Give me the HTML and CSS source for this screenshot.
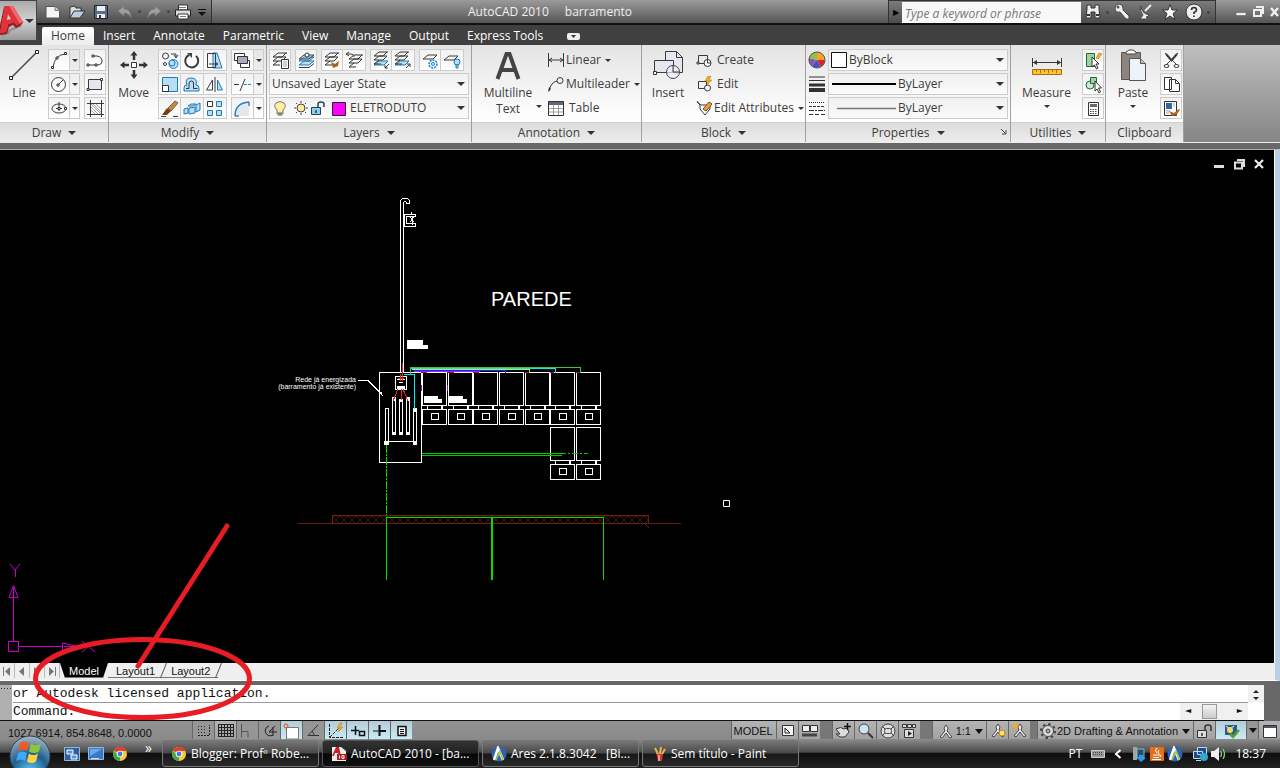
FILE: index.html
```
<!DOCTYPE html>
<html lang="pt-BR">
<head>
    <meta charset="UTF-8">
    <meta name="viewport" content="width=device-width, initial-scale=1.0">
    <title>AutoCAD 2010 - barramento</title>
    <link rel="stylesheet" href="styles.css">
</head>
<body>

    <!-- Title bar -->
    <header class="titlebar">
        <button class="app-button" aria-label="Application menu">
            <svg width="36" height="39" viewBox="0 0 36 39">
                <path d="M1 33 2 35 9 33 11 30 21 26 24 20 17 24z" fill="#6d6d6d" opacity=".5"/>
                <path fill-rule="evenodd" d="M5 5h8l10 16-6 3-3-3-6 2-2 8-6 1zM8 13l-1 6 4-1z" fill="#e0323a"/>
                <path d="M5 5 0 32v-8L4 6z" fill="#9e1118"/>
                <path d="M13 5l10 16-3 2L9 5z" fill="#f2666b"/>
                <path d="M0 32l6-1 2-8 6-2 3 3 6-3-3 4-4 2-3-3-4 2-2 7-7 1z" fill="#a5161d"/>
                <path d="M25 18h9l-4.500 4z" fill="#333"/>
            </svg>
        </button>
        <div class="quick-access">
            <button aria-label="New"><svg width="18" height="18"><path d="M2 3.500h9l4.500 4V15H2z" fill="#f4f4f4" stroke="#555"/><path d="M11 3.500v4h4.500" fill="#ccc" stroke="#777"/></svg></button>
            <button aria-label="Open"><svg width="18" height="18"><path d="M2 15V4l5-1 1 2h5v3" fill="#ddd" stroke="#333"/><path d="M2 15 6 8h11l-5 7z" fill="#bcd" stroke="#333"/></svg></button>
            <button aria-label="Save"><svg width="18" height="18"><path d="M2.500 2.500h13v13h-13z" fill="#5b6d84" stroke="#223"/><path d="M5 3h8v5H5zM5 11h8v4H5z" fill="#eee"/><path d="M7 12h2v3H7z" fill="#334"/></svg></button>
            <button aria-label="Undo"><svg width="18" height="18"><path d="M2 8l6-5v3q7 0 7 9-2-5-7-5v3z" fill="#a0a0a0" stroke="#777" stroke-width=".7"/></svg></button>
            <i class="dot"></i>
            <button aria-label="Redo"><svg width="18" height="18"><path d="M16 8l-6-5v3q-7 0-7 9 2-5 7-5v3z" fill="#a0a0a0" stroke="#777" stroke-width=".7"/></svg></button>
            <i class="dot"></i>
            <button aria-label="Plot"><svg width="18" height="18"><path d="M4.500 2h9v5h-9z" fill="#fff" stroke="#333"/><path d="M1.500 7h15v6h-15z" fill="#ddd" stroke="#222"/><path d="M4 11h10v5H4z" fill="#fff" stroke="#333"/><path d="M5 4.500h7M6 13.500h6" stroke="#777"/></svg></button>
            <button aria-label="Customize"><svg width="8" height="18"><path d="M0 6.500h8" stroke="#111"/><path d="M0 9h8l-4 4z" fill="#111"/></svg></button>
        </div>
        <p class="app-title"><span>AutoCAD 2010</span><span>barramento</span></p>
        <div class="infocenter">
            <button aria-label="Collapse search" class="collapse">&#9654;</button>
            <input type="text" aria-label="Search" placeholder="Type a keyword or phrase">
            <button aria-label="Find"><svg width="18" height="18"><path d="M3 2h4v3h4V2h4v4l1 9h-5v-6H7v6H2l1-9z" fill="#eee" stroke="#333"/><path d="M3 12h3M12 12h3" stroke="#333" stroke-width="2"/></svg></button>
            <i class="dot"></i>
            <button aria-label="Subscription"><svg width="18" height="18"><path d="M2 5q0-4 4-4t4 4v2l6 6v3h-3l-6-7q-5 1-5-4z" fill="#eee" stroke="#444"/><circle cx="5" cy="4" r="1.500" fill="#555"/></svg></button>
            <button aria-label="Communication"><svg width="18" height="18"><path d="M4 3q0 7 8 9-1 2-3 2l2 2H3l3-4Q2 8 4 3z" fill="#eee" stroke="#444"/><path d="M8 8l6-6" stroke="#eee" stroke-width="2"/></svg></button>
            <button aria-label="Favorites"><svg width="18" height="18"><path d="M9 1.500 11 7h5.500L12 10.500 14 16.500 9 13 4 16.500 6 10.500 1.500 7H7z" fill="#fff" stroke="#333"/></svg></button>
            <button aria-label="Help"><svg width="18" height="18"><circle cx="9" cy="9" r="8" fill="#eee" stroke="#333"/><path d="M6.500 7q0-2.500 2.500-2.500T11.500 7Q11.500 8.500 9 9.500V11M9 12.500v1.500" fill="none" stroke="#333" stroke-width="1.700"/></svg></button>
            <i class="dot"></i>
        </div>
        <div class="window-controls">
            <button aria-label="Minimize"><svg width="14" height="14"><path d="M2 7.500h10v3H2z" fill="#eee" stroke="#555" stroke-width=".5"/></svg></button>
            <button aria-label="Restore"><svg width="14" height="14"><path d="M5 2h7v7M3 5h7v6H3z" fill="none" stroke="#eee" stroke-width="2"/></svg></button>
            <button aria-label="Close"><svg width="12" height="14"><path d="M3 3l7 8M10 3l-7 8" stroke="#eee" stroke-width="2.500"/></svg></button>
        </div>
    </header>

    <!-- Ribbon tabs -->
    <nav class="ribbon-tabs">
        <button class="active">Home</button>
        <button>Insert</button>
        <button>Annotate</button>
        <button>Parametric</button>
        <button>View</button>
        <button>Manage</button>
        <button>Output</button>
        <button>Express Tools</button>
        <button class="pill" aria-label="Minimize ribbon"><svg width="13" height="7"><rect width="13" height="7" rx="2" fill="#eee"/><path d="M4 2h5L6.500 5z" fill="#333"/></svg></button>
    </nav>

    <!-- Ribbon -->
    <section class="ribbon">

        <div class="panel draw">
            <div class="panel-body">
                <button class="big">
                    <svg width="32" height="32"><path d="M4 28 28 4" stroke="#444" stroke-width="1.500"/><path d="M1.500 27.500h3v3h-3zM27.500 1.500h3v3h-3z" fill="#fff" stroke="#222"/></svg>
                    Line
                </button>
                <div class="tool-col">
                    <div class="tools">
                        <button class="tool" aria-label="Arc"><svg><path class="ln" d="M4 17Q6 5 16 4"/><path class="node" d="M2.500 16.500h2v2h-2zM7 7h2v2H7zM15.500 2.500h2v2h-2z"/></svg></button><button class="more" aria-label="More arcs"></button>
                    </div>
                    <div class="tools">
                        <button class="tool" aria-label="Circle"><svg><circle class="ln" cx="9.500" cy="10.500" r="7"/><path class="ln" d="M9 11l5-5"/><path class="node" d="M8 10h2v2H8z"/></svg></button><button class="more" aria-label="More circles"></button>
                    </div>
                    <div class="tools">
                        <button class="tool" aria-label="Ellipse"><svg><ellipse class="ln" cx="10" cy="10.500" rx="7" ry="4.500"/><path class="ln" d="M10 4v9M7 10.500h6"/><path class="node" d="M9 9.500h2v2H9zM15.500 9.500h2v2h-2z"/></svg></button><button class="more" aria-label="More ellipses"></button>
                    </div>
                </div>
                <div class="tool-col">
                    <button class="tool" aria-label="Polyline"><svg><path class="ln" d="M3 15h8M8 6h4q5 1 5 5t-5 4h-1"/><path class="node" d="M2 14h2v2H2zM10 14h2v2h-2zM7 5h2v2H7z"/></svg></button>
                    <button class="tool" aria-label="Rectangle"><svg><path class="ln soft" d="M3.500 5.500h13v10h-13z"/><path class="node" d="M2 14.500h2v2H2zM15.500 4.500h2v2h-2z"/></svg></button>
                    <button class="tool" aria-label="Hatch"><svg><path class="ln" d="M5.500 2v17M16.500 2v17M2 5.500h17M2 16.500h17"/><path class="thin" d="M6 9l7 7M6 12l4 4M8 6l8 8M11 6l5 5M6 6l10 10"/></svg></button>
                </div>
            </div>
            <button class="panel-title">Draw</button>
        </div>

        <div class="panel modify">
            <div class="panel-body">
                <button class="big">
                    <svg width="32" height="32"><path d="M16 5v6M16 21v6M5 16h6M21 16h6" stroke="#333" stroke-width="2.500"/><path d="M12.500 6.500 16 2l3.500 4.500zM12.500 25.500 16 30l3.500-4.500zM6.500 12.500 2 16l4.500 3.500zM25.500 12.500 30 16l-4.500 3.500z" fill="#333"/><path d="M13.500 13.500h5v5h-5z" fill="#fff" stroke="#333"/></svg>
                    Move
                </button>
                <div class="tool-col">
                    <div class="tools">
                        <button class="tool" aria-label="Copy"><svg><circle class="ln" cx="6.500" cy="6" r="3"/><circle class="blue" cx="14.500" cy="14" r="4.500"/><circle class="blue" cx="13" cy="13" r="3"/><circle class="ln" cx="6" cy="14" r="1.500"/><path class="ln" d="M12 4h5v3M15 5l2 3 2-3"/></svg></button><button class="tool" aria-label="Rotate"><svg><path class="ln thick" d="M8 5a6.500 6.500 0 1 0 7 1"/><path d="M6 3h5v5z" fill="#444"/></svg></button><button class="tool" aria-label="Stretch"><svg><path class="blue" d="M9 3h4l5 15H9z"/><path class="ln" d="M3.500 3.500h8v14h-8z"/><path class="ln" d="M5 14h8M11 12l3 2-3 2"/></svg></button>
                    </div>
                    <div class="tools">
                        <button class="tool" aria-label="Scale"><svg><path class="blue" d="M3.500 3.500h15v14h-15z"/><path class="node" d="M3.500 11.500h6v6h-6z"/></svg></button><button class="tool" aria-label="Offset"><svg><path class="blue" d="M3 17v-3q0-3 3-3Q3 4 10 4t5 7q3 0 3 3v3z"/><path class="ln" d="M5 14.500h3V10q0-3 2.500-3t2 3v4.500h4"/></svg></button><button class="tool" aria-label="Mirror"><svg><path class="ln" d="M8.500 6v10h-6zM11 3v15"/><path class="blue" d="M13.500 6v10h5z"/></svg></button>
                    </div>
                    <div class="tools">
                        <button class="tool" aria-label="Erase"><svg><path d="M9 10 16 3l3 2-7 8z" fill="#c08a3a" stroke="#765"/><path d="M3 17 8 10l4 3-4 4z" fill="#7a3c10"/><path class="ln" d="M2 18.500h5M14 18.500h5"/></svg></button><button class="tool" aria-label="Explode"><svg><path class="blue" d="M3 11l4-1v5l-4 1zM8 10l6-1v6l-6 1zM15 7l4-2v7l-4 2zM7 8l3-2h5l-3 2z"/></svg></button><button class="tool" aria-label="Array"><svg><path class="node" d="M3.500 3.500h5v5h-5z"/><path class="blue" d="M12.500 3.500h5v5h-5zM3.500 12.500h5v5h-5zM12.500 12.500h5v5h-5z"/></svg></button>
                    </div>
                </div>
                <div class="tool-col">
                    <div class="tools">
                        <button class="tool" aria-label="Draw order"><svg><path class="node" d="M2.500 3.500h10v7h-10zM8.500 10.500h9v7h-9z"/><path d="M5.500 6.500h10v7h-10z" fill="#aab" stroke="#333"/></svg></button><button class="more" aria-label="More order"></button>
                    </div>
                    <div class="tools">
                        <button class="tool" aria-label="Trim"><svg><path class="ln" d="M2 10.500h5M8 17l5-12"/><path d="M12 10.500h8" stroke="#2a85c4" stroke-dasharray="3 1"/></svg></button><button class="more" aria-label="More trim"></button>
                    </div>
                    <div class="tools">
                        <button class="tool" aria-label="Fillet"><svg><path class="soft" d="M3 18Q2 5 17 4v14z"/><path d="M3 18Q3 5 17 4" fill="none" stroke="#2a85c4" stroke-width="1.500"/><path class="ln" d="M3 18h4M17 4v4"/></svg></button><button class="more" aria-label="More fillet"></button>
                    </div>
                </div>
            </div>
            <button class="panel-title">Modify</button>
        </div>

        <div class="panel layers">
            <div class="panel-body column">
                <div class="tool-row">
                    <button class="tool" aria-label="Layer properties"><svg><use href="#layers"/><path class="node" d="M11.500 9.500h7v9h-7z"/><path class="thin" d="M13 12h4M13 14h4M13 16h4"/></svg></button>
                    <button class="tool" aria-label="Make current"><svg><path class="blue" d="M3 15l5-4h10l-5 4zM3 11l5-4h10l-5 4z"/><path class="ln" d="M3 17.500h10l5-4M3 9l5-4h10l-5 4z"/><circle class="node" cx="11" cy="5" r="2"/></svg></button>
                    <div class="tools"><button class="tool" aria-label="Match layer"><svg><use href="#layers"/><path d="M9 12l4 2 4-3-1 5-5 2z" fill="#a7601d"/></svg></button><button class="tool" aria-label="Previous layer"><svg><use href="#layers" x="3" y="2"/><path class="ln" d="M4 4h4q3 0 3 3M6 2 3 4l3 2"/></svg></button></div>
                    <div class="tools"><button class="tool" aria-label="Isolate layer"><svg><path class="blue" d="M3 15l5-4h9l-4 4z"/><use href="#layers" y="-1"/><path class="ln" d="M18 14l-4 4M14 15v3h3"/></svg></button><button class="tool" aria-label="Unisolate layer"><svg><path class="blue" d="M3 15l5-4h9l-4 4z"/><use href="#layers" y="-1"/><path class="ln" d="M18 14l-4 4M15 14h3v3"/></svg></button></div>
                    <div class="tools"><button class="tool" aria-label="Freeze layer"><svg><path class="ln" d="M3 9l5-4h9l-4 4z"/><circle cx="13" cy="14" r="4" fill="#e4f3fb" stroke="#2a85c4" stroke-width="1.500" stroke-dasharray="2 1"/><circle cx="13" cy="14" r="1.500" fill="none" stroke="#2a85c4"/></svg></button><button class="tool" aria-label="Layer off"><svg><path class="ln" d="M3 10l5-4h9l-4 4z"/><circle class="blue" cx="16" cy="12" r="3"/><path class="blue" d="M15 15h2v3h-2z"/></svg></button></div>
                </div>
                <div class="combo">
                    <select aria-label="Layer state"><option>Unsaved Layer State</option></select>
                </div>
                <div class="combo">
                    <svg width="78" height="20">
                        <path d="M7 12Q3 8 6 5q4-3 8 0 3 3-1 7v4H7z" fill="#ffefa0" stroke="#776"/><path d="M8 15h4M8 17h4" stroke="#555"/>
                        <circle cx="31" cy="10" r="4" fill="#ffe9a0" stroke="#444"/><path d="M31 3v2M31 15v2M24 10h2M36 10h2M26 5l1 1M36 5l-1 1M26 15l1-1M36 15l-1-1" stroke="#444"/>
                        <path d="M41.500 9.500h9v7h-9z" fill="#8fd0ee" stroke="#245"/><path d="M48 9V6q0-2 3-2t3 2v3M46 12v3" fill="none" stroke="#245" stroke-width="1.500"/>
                        <path d="M62.500 4.500h13v13h-13z" fill="#f0f" stroke="#222"/>
                    </svg>
                    <select aria-label="Layer"><option>ELETRODUTO</option></select>
                </div>
            </div>
            <button class="panel-title">Layers</button>
        </div>

        <div class="panel annotation">
            <div class="panel-body">
                <button class="big">
                    <svg width="32" height="32"><path d="M5.500 30 14.500 5h3l9 25M9 21h14" fill="none" stroke="#444" stroke-width="4"/></svg>
                    <span class="two-line">Multiline<br>Text</span>
                </button>
                <i class="caret side"></i>
                <div class="text-tools">
                    <button><svg width="16" height="16"><path class="ln" d="M.5 1v14M15.500 1v14M1 8h14M4 6 1 8l3 2M12 6l3 2-3 2"/></svg>Linear<i class="caret"></i></button>
                    <button><svg width="16" height="16"><path class="ln" d="M1 15Q3 6 9 5"/><path d="M0 16l1-5 2 2z" fill="#333"/><circle class="ln" cx="12" cy="4.500" r="3"/></svg>Multileader<i class="caret"></i></button>
                    <button class="spaced"><svg width="16" height="16"><path class="node" d="M.5 1.500h15v14H.5z"/><path d="M1 2h14v3H1z" fill="#667"/><path class="thin" d="M1 8.500h14M1 12h14M5.500 5v10M10.500 5v10"/></svg>Table</button>
                </div>
            </div>
            <button class="panel-title">Annotation</button>
        </div>

        <div class="panel block">
            <div class="panel-body">
                <button class="big">
                    <svg width="32" height="32"><path class="ln soft" d="M13.500 2.500h11l6 6v15h-17z"/><path class="ln" d="M24.500 2.500v6h6"/><path class="ln soft" d="M2.500 11.500h19v12h-19z"/><circle cx="21" cy="23" r="6.500" fill="#eef" fill-opacity=".7" stroke="#444"/><path class="ln" d="M21 17v6h6"/><path class="node" d="M1.500 22.500h3v3h-3z"/></svg>
                    Insert
                </button>
                <div class="text-tools">
                    <button class="spaced"><svg width="16" height="16"><path class="ln" d="M2.500 3.500h9v8h-9z"/><circle class="node" cx="11.500" cy="11" r="3.500"/><path class="ln" d="M11.500 8v3h3"/><path class="node" d="M1 10h2v2H1z"/></svg>Create</button>
                    <button class="spaced"><svg width="16" height="16"><path class="ln" d="M2.500 5.500h8v7h-8z"/><circle class="node" cx="11.500" cy="12" r="3"/><path d="M12 0 9 5h3l-1 4 5-5h-3l2-4z" fill="#f9a825" stroke="#b70" stroke-width=".5"/></svg>Edit</button>
                    <button><svg width="16" height="16"><path class="ln" d="M1 2l4 3h9v4l-5 6-5-6V5M4 5 1 1"/><path d="M7 9l6-7 3 2-6 7z" fill="#e8a53c" stroke="#742"/></svg>Edit Attributes<i class="caret"></i></button>
                </div>
            </div>
            <button class="panel-title">Block</button>
        </div>

        <div class="panel properties">
            <div class="panel-body column">
                <div class="prop">
                    <svg width="18" height="18"><circle cx="9" cy="9" r="8" fill="#eee"/><path d="M9 9V1a8 8 0 0 1 8 8z" fill="#f5a623"/><path d="M9 9h8a8 8 0 0 1-5 7z" fill="#d9252b"/><path d="M9 9l3 7a8 8 0 0 1-8-1z" fill="#3a50c8"/><path d="M9 9l-5 6a8 8 0 0 1-3-8z" fill="#8855b5"/><path d="M9 9 1 7a8 8 0 0 1 8-6z" fill="#8bc34a"/><circle cx="9" cy="9" r="8" fill="none" stroke="#555"/></svg>
                    <div class="combo">
                        <svg width="19" height="20"><path d="M2.500 2.500h15v15h-15z" fill="#fff" stroke="#111"/></svg>
                        <select aria-label="Object color"><option>ByBlock</option></select>
                    </div>
                </div>
                <div class="prop">
                    <svg width="18" height="18"><path d="M1 2h16M1 5.500h16" stroke="#333"/><path d="M1 10h16" stroke="#333" stroke-width="3"/><path d="M1 15h16" stroke="#333" stroke-width="4"/></svg>
                    <div class="combo">
                        <svg width="68" height="20"><path d="M3 10h64" stroke="#000" stroke-width="2"/></svg>
                        <select aria-label="Lineweight"><option>ByLayer</option></select>
                    </div>
                </div>
                <div class="prop">
                    <svg width="18" height="18" stroke="#333"><path d="M1 3.500h16" stroke-dasharray="1 1"/><path d="M1 7.500h16" stroke-dasharray="3 1"/><path d="M1 11.500h16" stroke-dasharray="5 1 2 1"/><path d="M1 15.500h16" stroke-dasharray="4 2"/></svg>
                    <div class="combo">
                        <svg width="68" height="20"><path d="M8 10.500h59" stroke="#777" stroke-width="1.500"/></svg>
                        <select aria-label="Linetype"><option>ByLayer</option></select>
                    </div>
                </div>
            </div>
            <button class="panel-title">Properties</button>
            <svg class="launcher" width="6" height="6"><path d="M0 0l4 4M5 1v4H1" fill="none" stroke="#444"/></svg>
        </div>

        <div class="panel utilities">
            <div class="panel-body">
                <button class="big">
                    <svg width="32" height="32"><path class="ln" d="M1.500 9v9M30.500 9v9M2 13.500h28"/><path d="M2 13.500 6 11v5zM30 13.500 26 11v5z" fill="#333"/><path d="M1.500 20.500h29v5h-29z" fill="#fcc52c" stroke="#a66a10"/><path d="M5.500 21v2M9.500 21v3M13.500 21v2M17.500 21v3M21.500 21v2M25.500 21v3" stroke="#a66a10"/></svg>
                    Measure
                    <i class="caret"></i>
                </button>
                <div class="tool-col">
                    <button class="tool" aria-label="Select similar"><svg><path d="M3.500 3.500h8v13h-8z" fill="#9fd39b" stroke="#264"/><path d="M13 8l3-5 3 1-4 5z" fill="#f9b233" stroke="#a70" stroke-width=".6"/><path class="node" d="M9 7v10l2.500-2 2 4 1.500-1-2-4h3z"/></svg></button>
                    <button class="tool" aria-label="Quick select"><svg><circle cx="7" cy="11" r="4" fill="#cfe8cc" stroke="#264"/><path d="M7.500 3.500h6v6h-6z" fill="#9fd39b" stroke="#264"/><path class="node" d="M12 7v10l2-2 2 4 1.500-1-2-4h3z"/></svg></button>
                    <button class="tool" aria-label="Calculator"><svg><path class="node" d="M5.500 4.500h10v13h-10z"/><path d="M7 6h7v3H7z" fill="#667"/><path d="M7 11.500h7M7 13.500h7M7 15.500h7" stroke="#444" stroke-dasharray="1.500 1"/></svg></button>
                </div>
            </div>
            <button class="panel-title">Utilities</button>
        </div>

        <div class="panel clipboard">
            <div class="panel-body">
                <button class="big">
                    <svg width="32" height="32"><path d="M4.500 3.500h19v27h-19z" fill="#8d857c" stroke="#555"/><path d="M9 5V3l3-2h4l3 2v2z" fill="#fff" stroke="#444"/><path d="M12.500 9.500h11l5 5v17h-16z" fill="#eef3fb" stroke="#555"/><path d="M23.500 9.500v5h5" fill="#bbb" stroke="#555"/></svg>
                    Paste
                    <i class="caret"></i>
                </button>
                <div class="tool-col">
                    <button class="tool" aria-label="Cut"><svg><path class="ln" d="M4 3l13 13M17 3 4 16"/><path class="thick ln" d="M5 4l6 7M16 4l-6 7"/><ellipse class="node" cx="5.500" cy="16" rx="2.500" ry="1.500"/><ellipse class="node" cx="15.500" cy="16" rx="2.500" ry="1.500"/></svg></button>
                    <button class="tool" aria-label="Copy clip"><svg><path class="node" d="M3.500 3.500h7v12h-7zM8.500 5.500h6l4 4v8h-10z"/><path class="ln" d="M14.500 5.500v4h4"/></svg></button>
                    <button class="tool" aria-label="Match properties"><svg><path class="node" d="M3.500 3.500h12v14h-12z"/><path d="M5 5h6v6H5z" fill="#2a6aa8"/><path class="thin" d="M12 6h2M12 8h2M5 13h4M5 15h3"/><path d="M8 13l5 2 5-4 1 1-4 5-4 1z" fill="#b0621c"/></svg></button>
                </div>
            </div>
            <p class="panel-title plain">Clipboard</p>
        </div>
    </section>

    <!-- Shared symbols -->
    <svg class="defs" width="0" height="0">
        <symbol id="layers" overflow="visible"><path d="M3 7l5-4h9M3 11l5-4h8l-4 4zM3 15h7M3 15l5-4M3 7h9l4-4" fill="none" stroke="#333"/></symbol>
        <symbol id="meter" overflow="visible">
            <path d="M.5.5h24v33H.5zM.5 37.500h24v15H.5zM9.500 41.500h7v6h-7z" fill="none" stroke="#fff"/>
            <path d="M5.500 34v3M19.500 34v3M20.500 34v3" stroke="#fff"/>
        </symbol>
        <pattern id="hatch" width="8" height="8" patternUnits="userSpaceOnUse"><path d="M0 0l8 8M8 0 0 8M0 4h3M5 4h3" stroke="#5a2013" stroke-width=".7"/></pattern>
        <symbol id="person" overflow="visible"><path d="M11 3l2 3-1 3 5 6-2 1-4-5-4 5-2-1 5-6-1-3z" fill="#eee" stroke="#444"/></symbol>
        <symbol id="chrome" viewBox="0 0 16 16"><circle cx="8" cy="8" r="7" fill="#fbcb2d"/><path d="M8 8 2 4.500A7 7 0 0 1 14.500 5H8z" fill="#e33b2e"/><path d="M8 8v7A7 7 0 0 1 2 4.500L6 10z" fill="#3ca853"/><circle cx="8" cy="8" r="3.200" fill="#fff"/><circle cx="8" cy="8" r="2.400" fill="#3c7fe0"/></symbol>
        <symbol id="ares" viewBox="0 0 16 16"><circle cx="8" cy="8" r="7.500" fill="#2c62b8"/><path d="M3 14 7 2l5 12" fill="none" stroke="#fff" stroke-width="2.500"/><path d="M5 14 9 5l3 9" fill="none" stroke="#a8c82a" stroke-width="1.500"/></symbol>
    </svg>

    <!-- Drawing area -->
    <main class="workspace">
        <div class="canvas">
            <svg class="drawing" width="700" height="440" viewBox="0 150 700 440" shape-rendering="crispEdges">
                <g fill="none" stroke="#fff">
                    <path d="M400.500 373V201l2-3h5l2 3v2h-3l-1-2h-1l-1 2v170"/>
                    <path d="M404 214.500h11v2h-9v7h9v3h-11zM411.500 212v3M410 217l4 5M414 217l-4 5M410 223h5M412 217v8"/>
                    <path d="M379.500 372.500h42v90h-42zM358 380.500h10l14 14"/>
                    <path d="M395.500 376.500h11v13h-11zM397 379h8M399 382h4"/>
                    <path d="M392.500 400.500h3v34h-3zM399.500 400.500h3v34h-3zM406.500 400.500h3v34h-3zM385.500 408.500h3v34h-3zM413.500 408.500h3v34h-3zM388 441.500h26"/>
                </g>
                <path d="M383 396l-4-3 2-2zM392 397h4v4h-4zM399 399h4v3h-4zM406 397h4v4h-4zM392 432h4v3h-4zM399 432h4v3h-4zM406 432h4v3h-4zM413 408h4v4h-4zM384 441h5v4h-5zM413 441h4v4h-4zM397 386h8v3h-8z" fill="#fff"/>
                <path d="M407 340h16v5h5v4h-21zM424 396h14v3h4v4h-18zM448 396h15v3h4v4h-19z" fill="#fff"/>

                <g>
                    <use href="#meter" x="422" y="372"/>
                    <use href="#meter" x="448" y="372"/>
                    <use href="#meter" x="473" y="372"/>
                    <use href="#meter" x="499" y="372"/>
                    <use href="#meter" x="525" y="372"/>
                    <use href="#meter" x="550" y="372"/>
                    <use href="#meter" x="576" y="372"/>
                    <use href="#meter" x="550" y="427"/>
                    <use href="#meter" x="576" y="427"/>
                </g>

                <!-- wiring -->
                <g fill="none">
                    <path d="M410.500 374v-6.500h170v5" stroke="#3c3"/>
                    <path d="M412 369.500h117v3" stroke="#dfd84a"/>
                    <path d="M411 368.500h144v4M555.500 368v4M404 374.500h10.500V409" stroke="#0ee"/>
                    <path d="M413 370.500h92v2" stroke="#22f"/>
                    <path d="M414 371.500h66" stroke="#a020f0"/>
                    <path d="M402.500 363v18M400.500 374v7M398 389l-5 12M401 389v11M403 389l5 12M398 378h6" stroke="#e22"/>
                    <path d="M421.500 385v6M447.500 385v6" stroke="#a0a"/>
                    <path d="M421 372.500h6M447 372.500h7M473 372.500h6M525 372.500h4M550 372.500h4M576 372.500h4" stroke="#b04"/>
                    <path d="M422 453.500h138M422 455.500h140" stroke="#0c0"/>
                    <path d="M560 453.500h28" stroke="#0c0" stroke-dasharray="6 2 2 2"/>
                    <path d="M386.500 445v72" stroke="#0d0" stroke-dasharray="8 1 2 1"/>
                </g>

                <!-- ground -->
                <path d="M332.500 515.500h316v8h-316z" fill="url(#hatch)" stroke="#6b2012"/>
                <path d="M298 523.500h383M644 523l5 5" stroke="#6b2012"/>
                <path d="M386.500 517v63M386 517.500h218M603.500 517v63" stroke="#0d0" fill="none"/>
                <path d="M492 517v63" stroke="#0d0" stroke-width="2"/>

                <text class="wall" x="491" y="306">PAREDE</text>
                <text class="note" x="356" y="382">Rede já energizada</text>
                <text class="note" x="356" y="389">(barramento já existente)</text>
            </svg>
            <svg class="pickbox" width="7" height="7"><path d="M.5.5h6v6h-6z" fill="none" stroke="#fff"/></svg>
            <svg class="ucs" width="100" height="96" viewBox="0 560 100 96"><path d="M8.500 641.500h10v10h-10zM13.500 641v-44M9 597.500h9l-4.500-12zM13.500 587v10M19 646.500h43M62.500 643v8l15-4.500zM64 646.500h12M10 564l5 6 5-6M15.500 570v7M82 641l13 11M95 641l-13 11" fill="none" stroke="#c0c"/></svg>
            <div class="doc-controls">
                <button aria-label="Minimize drawing"><svg width="12" height="12"><path d="M1 7h10v3H1z" fill="#ddd"/></svg></button>
                <button aria-label="Restore drawing"><svg width="12" height="12"><path d="M4 2h7v7M2 4.500h7v6H2z" fill="none" stroke="#ddd" stroke-width="2"/></svg></button>
                <button aria-label="Close drawing"><svg width="12" height="12"><path d="M2 2l8 8M10 2l-8 8" stroke="#eee" stroke-width="2.200"/></svg></button>
            </div>
        </div>
        <div class="layout-tabs">
            <button class="nav" aria-label="First"><svg width="14" height="14"><path d="M3.500 3v9" stroke="#777"/><path d="M10 3v9L5 7.500z" fill="#777"/></svg></button>
            <button class="nav" aria-label="Previous"><svg width="14" height="14"><path d="M9 3v9L4 7.500z" fill="#777"/></svg></button>
            <button class="nav" aria-label="Next"><svg width="14" height="14"><path d="M4 3v9l5-4.500z" fill="#777"/></svg></button>
            <button class="nav" aria-label="Last"><svg width="14" height="14"><path d="M10.500 3v9" stroke="#777"/><path d="M4 3v9l5-4.500z" fill="#777"/></svg></button>
            <button class="sheet current">Model</button>
            <button class="sheet">Layout1</button>
            <button class="sheet">Layout2</button>
        </div>
        <svg class="markup" width="230" height="206" viewBox="30 518 230 206"><ellipse cx="142.500" cy="678.500" rx="107" ry="39" fill="none" stroke="#e81c25" stroke-width="5"/><path d="M227 526 138 666" stroke="#e81c25" stroke-width="5" stroke-linecap="round"/></svg>
    </main>

    <!-- Command line -->
    <section class="command">
        <div class="grip"></div>
        <div class="command-lines">
            <p>or Autodesk licensed application.</p>
            <div class="prompt">
                <label for="cmd">Command:</label>
                <input id="cmd" type="text">
                <div class="hscroll"><i>&#9668;</i><b></b><i>&#9658;</i></div>
            </div>
        </div>
        <div class="vscroll"><i></i><i class="down"></i></div>
    </section>

    <!-- Status bar -->
    <footer class="status">
        <span class="coords">1027.6914, 854.8648, 0.0000</span>
        <div class="toggles">
            <button aria-label="Snap"><svg><path d="M5 5.500h9M5 8.500h9M5 11.500h9" stroke="#222" stroke-dasharray="1 2"/><path d="M5 14.500h11.500V4" fill="none" stroke="#222" stroke-dasharray="2 1"/></svg></button>
            <button class="lit" aria-label="Grid"><svg><path d="M3.500 3v13M6.500 3v13M9.500 3v13M12.500 3v13M15.500 3v13M18.500 3v13M3 3.500h16M3 6.500h16M3 9.500h16M3 12.500h16M3 15.500h16" stroke="#222"/></svg></button>
            <button aria-label="Ortho"><svg><path d="M4.500 3v13.500M4 10.500h7v6" fill="none" stroke="#555"/></svg></button>
            <button aria-label="Polar"><svg><path d="M16 5l-6 6h8M10 5a5 5 0 1 0 4 9M14 6v9" fill="none" stroke="#222"/></svg></button>
            <button class="on" aria-label="Object snap"><svg><path d="M5.500 6.500h12V18h-12z" fill="#fff" stroke="#777"/><circle cx="5" cy="5" r="2" fill="none" stroke="#e04a1a"/></svg></button>
            <button aria-label="Tracking"><svg><path d="M15 4 5 14.500h11M9 10l3 5" fill="none" stroke="#333"/></svg></button>
            <button class="on" aria-label="Dynamic UCS"><svg><path d="M4.500 3v13.500H18M5 16l9-9" fill="none" stroke="#222" stroke-dasharray="3 1"/><path d="M15 2l-3 5h3l-2 4 5-5h-3l2-4z" fill="#f9b233" stroke="#a70" stroke-width=".5"/></svg></button>
            <button class="on" aria-label="Dynamic input"><svg><path d="M4 9.500h8M8.500 5v9M12.500 10.500h5v4h-5z" fill="none" stroke="#111" stroke-width="1.500"/></svg></button>
            <button class="on" aria-label="Lineweight"><svg><path d="M4 10h7" stroke="#111"/><path d="M10 10h7M10.500 4v11" stroke="#111" stroke-width="2"/></svg></button>
            <button class="on" aria-label="Quick properties"><svg><path d="M7 5.500h8v9H7z" fill="#eee" stroke="#111" stroke-width="1.500"/><path d="M9 8.500h4M9 10.500h4M9 12.500h4" stroke="#111"/></svg></button>
        </div>
        <div class="status-right">
            <button class="lit text">MODEL</button>
            <button class="lit" aria-label="Layouts"><svg><path d="M5.500 4.500h11v10h-11z" fill="#f4f4f4" stroke="#333"/><path d="M8 7v5h5z" fill="none" stroke="#222"/></svg></button>
            <button class="lit" aria-label="Quick view"><svg><path d="M3.500 4.500h7v6h-7zM11.500 4.500h7v6h-7z" fill="#eee" stroke="#333"/><path d="M3 14h15" stroke="#444" stroke-width="3"/></svg></button>
            <i class="sep"></i>
            <button class="lit" aria-label="Pan"><svg><path d="M3 8q5-3 8 0l3-1 2 4-4 5H7l-4-3h4z" fill="#ddd" stroke="#333"/><path d="M14.500 2v7M11 5.500h7" stroke="#111" stroke-width="1.500"/></svg></button>
            <button class="lit" aria-label="Zoom"><svg><circle cx="9" cy="8" r="5" fill="#cfe3f0" stroke="#444"/><path d="M13 12l5 5" stroke="#333" stroke-width="2"/></svg></button>
            <button class="lit" aria-label="Wheel"><svg><circle cx="11" cy="10" r="7" fill="#ddd" stroke="#444"/><rect x="7.500" y="7.500" width="7" height="5" rx="2" fill="none" stroke="#444"/><path d="M5 5l3 3M17 5l-3 3M5 15l3-3M17 15l-3-3" stroke="#444"/></svg></button>
            <button class="lit" aria-label="Show motion"><svg><path d="M3.500 3.500h4v3h-4zM8.500 3.500h4v3h-4zM13.500 3.500h3v3h-3zM5.500 8.500h9v8h-9z" fill="#ddd" stroke="#333"/><path d="M9 10v5l4-2.500z" fill="#222"/></svg></button>
            <i class="sep"></i>
            <button class="lit text"><svg><use href="#person"/></svg>1:1<i class="caret dark"></i></button>
            <button class="lit" aria-label="Annotation visibility"><svg><use href="#person"/><circle cx="15" cy="12" r="3" fill="#ffd97a" stroke="#b80"/></svg></button>
            <button class="lit" aria-label="Auto scale"><svg><use href="#person"/><path d="M6 2 3 7h3l-1 3 5-5H7l2-3z" fill="#f9a825"/></svg></button>
            <i class="sep small"></i>
            <button class="lit text"><svg class="gear"><circle cx="8" cy="9" r="7" fill="none" stroke="#444" stroke-width="2" stroke-dasharray="2.500 3"/><circle cx="8" cy="9" r="5.500" fill="#ddd" stroke="#444"/><circle cx="8" cy="9" r="2" fill="#aaa" stroke="#444"/></svg>2D Drafting &amp; Annotation<i class="caret dark"></i></button>
            <button class="lit" aria-label="Lock"><svg><path d="M3.500 9.500h9v7h-9z" fill="#ddd" stroke="#333"/><path d="M11 9V6q0-2 3-2t3 2v4M8 12v3" fill="none" stroke="#333" stroke-width="1.500"/></svg></button>
            <button class="on wide" aria-label="Hardware acceleration"><svg><path d="M4 4h12v10H4z" fill="#2c5a96"/><path d="M5 5l4 3 4-3" stroke="#fff" fill="none"/><circle cx="9" cy="9" r="3" fill="#f2dc62"/><path d="M9 13l3 3 6-7" fill="none" stroke="#5aa02c" stroke-width="2.500"/></svg></button>
            <button class="slim" aria-label="Status menu"><i class="caret dark"></i></button>
            <button class="lit" aria-label="Clean screen"><svg><path d="M4.500 4.500h13v12h-13z" fill="#fff" stroke="#333"/><path d="M5 6h12" stroke="#556" stroke-width="2"/></svg></button>
        </div>
    </footer>

    <!-- Windows taskbar -->
    <div class="taskbar">
        <button class="start" aria-label="Iniciar">
            <svg width="42" height="42" viewBox="0 0 42 42">
                <defs><radialGradient id="orb" cx=".5" cy=".9" r=".9"><stop offset="0" stop-color="#5fd0f5"/><stop offset=".5" stop-color="#1f5d8e"/><stop offset="1" stop-color="#a9b9c4"/></radialGradient></defs>
                <circle cx="21" cy="21" r="20" fill="url(#orb)" stroke="#23455f"/>
                <path d="M11 8q5-3 9 0l-2 8q-4-3-9 0z" fill="#ee5a24"/><path d="M22 8.500q4 3 10 0l-2 8q-5 3-10 0z" fill="#8cc63f"/><path d="M9 18q4-3 9 0l-2 8q-4-3-9 0z" fill="#3fa9f5"/><path d="M20 18.500q4 3 9 0l-2 8q-4 3-9 0z" fill="#ffd23f"/>
            </svg>
        </button>
        <div class="quick-launch">
            <button aria-label="Flip windows"><svg width="16" height="14"><path d="M.5.500h15v13H.5z" fill="#2b5fa8" stroke="#9bc"/><path d="M3 3h6v4H3zM7 8h6v4H7z" fill="#5a8fd0" stroke="#fff"/></svg></button>
            <button aria-label="Show desktop"><svg width="16" height="14"><path d="M.5.500h15v12H.5z" fill="#3a78cc" stroke="#9bc"/><path d="M2 2h12L2 9z" fill="#6ea6e8"/><path d="M3 11.500h8" stroke="#cde"/></svg></button>
            <button aria-label="Chrome"><svg width="16" height="16"><use href="#chrome"/></svg></button>
        </div>
        <span class="chevron">»</span>
        <div class="tasks">
            <button><svg width="16" height="16"><use href="#chrome"/></svg>Blogger: Profº Robe...</button>
            <button class="current"><svg width="16" height="16"><path d="M1 1h9l5 4v10H1z" fill="#eee"/><path d="M1 10 5 1h3l2 9H8L7 7H4l-1 3z" fill="#c8202a"/><path d="M6 8h10v6H6z" fill="#b01820"/><path d="M8.500 9.500v3M11 9.500h2v3h-2z" stroke="#fff" fill="none"/></svg>AutoCAD 2010 - [ba...</button>
            <button><svg width="16" height="16"><use href="#ares"/></svg>Ares 2.1.8.3042 &nbsp; [Bi...</button>
            <button><svg width="16" height="16"><path d="M5 7h7l-1 8H7z" fill="#c33"/><path d="M7 8 4 2M9 8l1-7M11 8l3-5" stroke="#e6b84c" stroke-width="2"/><path d="M8 9v6" stroke="#fff"/></svg>Sem título - Paint</button>
        </div>
        <div class="tray">
            <span>PT</span>
            <svg width="14" height="8"><path d="M.5.500h13v7H.5z" fill="#999" stroke="#ccc"/><path d="M2 2.500h10M2 4.500h10" stroke="#444" stroke-dasharray="1 1"/></svg>
            <svg width="8" height="10"><path d="M6.500 1 2 5l4.500 4" fill="none" stroke="#fff" stroke-width="2"/></svg>
            <div class="tray-icons">
                <svg width="16" height="16"><path d="M2 1h4v13H2z" fill="#9aa7a7"/><path d="M6 3h7v9H6z" fill="#24506e" stroke="#8bc"/><path d="M8 9h4v3h3l-5 4-4-4h2z" fill="#2a9be8"/></svg>
                <svg width="16" height="16"><rect x="1" y="1" width="14" height="14" rx="1" fill="#e76f1c"/><path d="M8 2q-3 3 0 5M10 4q-2 2 0 4M4 9h7q2 0 0 2M4 11.500h6M3 13.500h9" fill="none" stroke="#fff"/></svg>
                <svg width="16" height="16"><use href="#ares"/></svg>
            </div>
            <div class="tray-icons">
                <svg width="16" height="16"><path d="M5.500 1.500h9v7h-9zM1.500 5.500h9v7h-9z" fill="#1c4f8c" stroke="#bde"/><path d="M4 14.500h5" stroke="#bde"/><circle cx="12" cy="11" r="4" fill="#2fa0e0"/><path d="M10 9l3 1-1 4z" fill="#59b84a"/></svg>
                <svg width="16" height="16"><path d="M1 5h3l5-4v14l-5-4H1z" fill="#eee"/><path d="M10.500 5q2 3 0 6M13 3q3 5 0 10" fill="none" stroke="#7ed37e" stroke-width="1.300"/></svg>
            </div>
            <time>18:37</time>
        </div>
    </div>

</body>
</html>
```
FILE: styles.css
```
* {
    box-sizing: border-box;
}

body {
    margin: 0;
    min-height: 100vh;
    display: flex;
    flex-direction: column;
    background: #686868;
    color: #3c3c3c;
    font-family: "Open Sans", "Noto Sans", sans-serif;
    font-size: 12px;
    line-height: 16px;
    overflow-x: hidden;
}

p {
    margin: 0;
}

button, input, select {
    font: inherit;
    color: inherit;
    margin: 0;
    padding: 0;
    border: 0;
    background: none;
    white-space: nowrap;
}

svg {
    display: block;
    flex: none;
}

.defs {
    position: absolute;
}

/* Title bar */
.titlebar {
    height: 25px;
    display: flex;
    background: linear-gradient(#9b9b9b, #555);
    border-bottom: 2px solid #111;
    position: relative;
}

.app-button {
    position: absolute;
    left: 0;
    top: 0;
    z-index: 2;
    width: 37px;
    height: 41px;
    background: linear-gradient(#aaa, #d2d2d2 50%, #999);
    border: 1px solid #444;
    border-left: 0;
}

.quick-access {
    width: 212px;
    padding-left: 44px;
    display: flex;
    align-items: center;
    gap: 6px;
    background: linear-gradient(#888, #4c4c4c);
    border-right: 1px solid #333;
}

.dot {
    width: 3px;
    height: 3px;
    margin: 0 -2px;
    border-radius: 50%;
    background: #444;
}

.app-title {
    flex: 1;
    display: flex;
    align-items: center;
    justify-content: center;
    gap: 16px;
    color: #f0f0f0;
}

.infocenter {
    width: 328px;
    display: flex;
    align-items: center;
    gap: 6px;
    background: linear-gradient(#7c7c7c, #4c4c4c);
    border: 1px solid #333;
    border-bottom: 0;
}

.infocenter .collapse {
    width: 13px;
    font-size: 8px;
    color: #000;
}

.infocenter input {
    width: 179px;
    height: 21px;
    margin: 0 -3px 0 -6px;
    padding: 2px 3px 0;
    background: #f8f8f8;
    font-style: italic;
}

.infocenter input::placeholder {
    color: #777;
    opacity: 1;
}

.window-controls {
    width: 64px;
    display: flex;
    align-items: center;
    justify-content: flex-end;
    gap: 3px;
}

/* Ribbon tabs */
.ribbon-tabs {
    height: 20px;
    padding: 2px 0 0 42px;
    display: flex;
    background: #404040;
    color: #fff;
}

.ribbon-tabs button {
    padding: 0 9px;
    height: 18px;
    line-height: 18px;
}

.ribbon-tabs .active {
    background: linear-gradient(#fff, #ececec);
    color: #3c3c3c;
    border-radius: 2px 2px 0 0;
}

.ribbon-tabs .pill {
    padding-left: 15px;
}

/* Ribbon */
.ribbon {
    height: 98px;
    display: flex;
    background: linear-gradient(#bfbfbf, #858585);
    border-bottom: 1px solid #eee;
}

.panel {
    flex: none;
    display: flex;
    flex-direction: column;
    position: relative;
    border-right: 1px solid #a0a0a0;
    background: linear-gradient(#e4e4e4, #fdfdfd 70px);
}

.draw { width: 109px; }
.modify { width: 158px; }
.layers { width: 205px; }
.annotation { width: 170px; }
.block { width: 164px; }
.properties { width: 205px; }
.utilities { width: 95px; }
.clipboard { width: 78px; }

.panel-body {
    height: 77px;
    padding-top: 4px;
    display: flex;
}

.panel-body.column {
    flex-direction: column;
    gap: 2px;
    padding-left: 2px;
}

.panel-title {
    height: 20px;
    width: 100%;
    display: flex;
    align-items: center;
    justify-content: center;
    gap: 7px;
    background: linear-gradient(#dcdcdc, #ededed);
    border-top: 1px solid #d0d0d0;
}

.panel-title:not(.plain)::after {
    content: "";
    border: 4px solid transparent;
    border-top-color: #333;
    border-bottom: 0;
}

.launcher {
    position: absolute;
    right: 3px;
    bottom: 7px;
}

.big {
    flex: none;
    width: 48px;
    display: flex;
    flex-direction: column;
    align-items: center;
    gap: 4px;
}

.modify .big { width: 49px; }
.annotation .big { width: 64px; padding-left: 8px; }
.block .big { width: 52px; }
.utilities .big { width: 71px; }
.clipboard .big { width: 54px; }

.caret {
    flex: none;
    border: 3px solid transparent;
    border-top-color: #333;
    border-bottom: 0;
}

.caret.side {
    align-self: flex-end;
    margin-bottom: 14px;
}

.caret.dark {
    border-width: 4px;
    border-top-width: 5px;
    border-bottom: 0;
    border-top-color: #111;
}

.two-line {
    text-align: center;
}

.tool-col {
    flex: none;
    display: flex;
    flex-direction: column;
    gap: 2px;
    margin-right: 4px;
}

.tool-col:last-child {
    margin-right: 0;
}

.tools {
    display: flex;
}

.tool-row {
    display: flex;
    gap: 4px;
}

.tool {
    width: 22px;
    height: 22px;
    border: 1px solid #ccc;
    background: linear-gradient(#f2f2f2, #fff);
}

.tools .tool + .tool {
    width: 23px;
}

.modify .tool {
    width: 23px;
}

.tools .tool + .tool {
    border-left: 0;
}

.tool svg {
    width: 20px;
    height: 20px;
    overflow: hidden;
}

.more {
    width: 10px;
    border: 1px solid #ccc;
    border-left: 0;
    display: flex;
    align-items: center;
    justify-content: center;
}

.more::after {
    content: "";
    border: 3px solid transparent;
    border-top-color: #333;
    border-bottom: 0;
}

.ln {
    fill: none;
    stroke: #3a3a3a;
}

.thick { stroke-width: 2; }
.soft { fill: #e4e7ee; }

.thin {
    fill: none;
    stroke: #666;
    stroke-width: 0.6;
}

.node {
    fill: #fff;
    stroke: #333;
}

.blue {
    fill: #b7def5;
    stroke: #1f7ab8;
}

/* Combo boxes */
.combo {
    flex: none;
    width: 200px;
    height: 22px;
    display: flex;
    align-items: center;
    border: 1px solid #ccc;
    background: linear-gradient(#f0f0f0, #fbfbfb);
    position: relative;
}

.combo select {
    flex: 1;
    min-width: 0;
    padding-left: 2px;
    appearance: none;
}

.combo::after {
    content: "";
    position: absolute;
    right: 3px;
    border: 4px solid transparent;
    border-top-color: #333;
    border-bottom: 0;
}

.prop {
    display: flex;
    align-items: center;
    gap: 2px;
}

.prop .combo {
    width: 180px;
}

.prop select {
    padding-left: 1px;
}

/* Icon and text commands */
.text-tools {
    display: flex;
    flex-direction: column;
    gap: 2px;
    padding-left: 6px;
}

.block .text-tools {
    padding-left: 2px;
}

.text-tools button {
    height: 22px;
    display: flex;
    align-items: center;
    gap: 2px;
}

.text-tools .spaced {
    gap: 5px;
}

.text-tools .caret {
    margin-left: 2px;
}

/* Drawing area */
.workspace {
    flex: 1;
    min-height: 400px;
    margin-top: 6px;
    display: flex;
    flex-direction: column;
    position: relative;
    border-top: 1px solid #aaa;
    border-right: 5px solid #b9cfe8;
    border-bottom: 1px solid #fff;
}

.canvas {
    flex: 1;
    position: relative;
    overflow: hidden;
    background: #000;
    border-right: 1px solid #fff;
}

.drawing {
    position: absolute;
    left: 0;
    top: 0;
}

.wall {
    fill: #fff;
    font: 20px "Liberation Sans", sans-serif;
}

.note {
    fill: #fff;
    font: 7px "Liberation Sans", sans-serif;
    text-anchor: end;
}

.pickbox {
    position: absolute;
    left: 723px;
    top: 350px;
}

.ucs {
    position: absolute;
    left: 0;
    bottom: 7px;
}

.doc-controls {
    position: absolute;
    right: 9px;
    top: 8px;
    display: flex;
    gap: 8px;
}

.markup {
    position: absolute;
    left: 30px;
    bottom: -44px;
    z-index: 3;
    pointer-events: none;
}

.layout-tabs {
    height: 17px;
    display: flex;
    background: #efefef;
    color: #111;
    font: 11px/16px "Liberation Sans", sans-serif;
}

.nav {
    width: 15px;
    height: 15px;
    border-right: 1px solid #bbb;
}

.sheet {
    position: relative;
    height: 15px;
    padding: 0 8px;
    border-bottom: 1px solid #777;
}

.sheet::after {
    content: "";
    position: absolute;
    right: -1px;
    top: 0;
    height: 15px;
    border-right: 1px solid #555;
    transform: skewX(-22deg);
}

.sheet.current {
    padding: 0 9px;
    background: #000;
    color: #fff;
    clip-path: polygon(0 0, 100% 0, calc(100% - 5px) 100%, 5px 100%);
}

/* Command line */
.command {
    display: flex;
    margin: 4px 16px 0 0;
    height: 36px;
    background: #fff;
    color: #111;
    font: 13px/17px "Liberation Mono", monospace;
    border-bottom: 1px solid #111;
}

.grip {
    width: 12px;
    background: radial-gradient(circle, #333 1px, transparent 1px) 0 2px / 3px 3px repeat-x, #b0b0b0;
}

.command-lines {
    flex: 1;
    padding-left: 1px;
}

.command-lines p {
    height: 18px;
    border-bottom: 1px solid #999;
}

.prompt {
    display: flex;
    line-height: 18px;
}

.prompt input {
    flex: 1;
    height: 17px;
    outline: 0;
}

.hscroll {
    width: 68px;
    height: 17px;
    display: flex;
    justify-content: space-between;
    padding: 0 5px;
    background: #f0f0f0;
}

.hscroll b {
    width: 15px;
    height: 15px;
    margin: 1px 10px 0 0;
    border: 1px solid #999;
    background: linear-gradient(#f4f4f4, #ccc);
}

.hscroll i {
    font: 8px/16px "DejaVu Sans", sans-serif;
}

.vscroll {
    width: 16px;
    height: 17px;
    display: flex;
    flex-direction: column;
    align-items: center;
    justify-content: space-between;
    padding: 5px 0 2px;
    background: #f0f0f0;
}

.vscroll i {
    border: 3px solid transparent;
    border-top: 0;
    border-bottom-color: #222;
}

.vscroll .down {
    border-top: 3px solid #222;
    border-bottom: 0;
}

/* Status bar */
.status {
    height: 18px;
    display: flex;
    align-items: center;
    background: linear-gradient(#929292, #8a8a8a);
    color: #111;
    font: 11px/16px "Liberation Sans", sans-serif;
}

.coords {
    width: 192px;
    padding: 5px 0 0 8px;
}

.toggles, .status-right {
    display: flex;
}

.status-right {
    margin-left: auto;
}

.status button {
    width: 22px;
    height: 18px;
    border-left: 1px solid #666;
    background: #969696;
    display: flex;
    align-items: center;
    justify-content: center;
}

.status svg {
    width: 21px;
    height: 18px;
}

.status .gear {
    width: 17px;
}

.status .lit {
    background: linear-gradient(#b4b4b4, #a2a2a2);
}

.status .on {
    background: linear-gradient(#b4ccd6, #c8ebf6);
}

.status .text {
    width: auto;
    padding: 2px 3px 0 2px;
}

.status .text .caret {
    margin-left: 4px;
}

.status .wide {
    width: 31px;
}

.status .slim {
    width: 12px;
}

.sep {
    width: 12px;
    background: #777;
}

.sep.small {
    width: 7px;
}

/* Windows taskbar */
.taskbar {
    height: 29px;
    display: flex;
    align-items: center;
    background: linear-gradient(#8c8c8c, #4b4b4b 45%, #0e0e0e 50%, #222);
    color: #fff;
}

.start {
    align-self: flex-start;
    display: flex;
    align-items: flex-start;
    margin: -4px 13px 0 9px;
    height: 33px;
    z-index: 1;
    overflow: hidden;
}

.quick-launch {
    display: flex;
    align-items: center;
    gap: 8px;
}

.chevron {
    width: 34px;
    padding: 6px 0 0 17px;
    font-size: 14px;
    line-height: 6px;
    align-self: flex-start;
}

.tasks {
    display: flex;
    gap: 3px;
}

.tasks button {
    width: 157px;
    height: 27px;
    padding: 0 8px;
    display: flex;
    align-items: center;
    gap: 4px;
    border: 1px solid #777;
    border-radius: 3px;
    background: linear-gradient(#777, #484848 48%, #181818 52%, #2a2a2a);
}

.tasks .current {
    background: linear-gradient(#333, #222 48%, #050505 52%, #111);
    border-color: #555;
}

.tray {
    margin-left: auto;
    padding-right: 14px;
    display: flex;
    align-items: center;
    gap: 9px;
}

.tray-icons {
    display: flex;
    gap: 2px;
}
```
